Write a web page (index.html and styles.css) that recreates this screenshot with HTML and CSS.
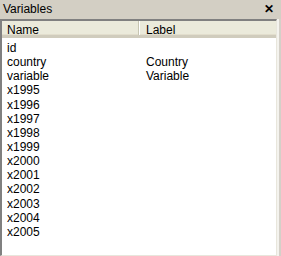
FILE: index.html
```html
<!DOCTYPE html>
<html lang="en">
<head>
    <meta charset="UTF-8">
    <title>Variables</title>
    <link rel="stylesheet" href="styles.css">
</head>
<body>
    <div id="panel">
        <div id="titleBar">
            <span>Variables</span>
            <span class="close">&#x2715;</span>
        </div>
        <div id="listBox">
            <div id="listHeader">
                <div class="col name">Name</div>
                <div class="col label">Label</div>
            </div>
            <div id="rows">
                <div class="row"><span class="name">id</span><span class="label"></span></div>
                <div class="row"><span class="name">country</span><span class="label">Country</span></div>
                <div class="row"><span class="name">variable</span><span class="label">Variable</span></div>
                <div class="row"><span class="name">x1995</span></div>
                <div class="row"><span class="name">x1996</span></div>
                <div class="row"><span class="name">x1997</span></div>
                <div class="row"><span class="name">x1998</span></div>
                <div class="row"><span class="name">x1999</span></div>
                <div class="row"><span class="name">x2000</span></div>
                <div class="row"><span class="name">x2001</span></div>
                <div class="row"><span class="name">x2002</span></div>
                <div class="row"><span class="name">x2003</span></div>
                <div class="row"><span class="name">x2004</span></div>
                <div class="row"><span class="name">x2005</span></div>
            </div>
        </div>
    </div>
</body>
</html>
```

FILE: styles.css
```css
* {
    margin: 0;
    padding: 0;
    box-sizing: border-box;
}
body {
    font-family: "Liberation Sans", Arial, sans-serif;
    font-size: 11px;
    color: black;
    background-color: #d4d0c8;
}
#panel {
    width: 281px;
    height: 256px;
    display: flex;
    flex-direction: column;
    background-color: #d4d0c8;
}
#titleBar {
    height: 19px;
    display: flex;
    align-items: center;
    justify-content: space-between;
    padding: 0 7px 1px 3px;
    background-color: #d3cfc4;
    font-size: 12px;
}
#titleBar .close {
    font-weight: bold;
    font-size: 12px;
}
#listBox {
    flex: 1;
    margin-right: 4px;
    background-color: white;
    border-top: 2px solid #808080;
    border-left: 2px solid #808080;
    border-right: 1px solid #e8e6dc;
    border-bottom: 1px solid #e8e6dc;
    box-shadow: 2px 0 0 #f4f3ee;
}
#listHeader {
    display: flex;
    height: 17px;
    background-color: #ebeadb;
    border-bottom: 3px solid #d0ccbd;
    box-shadow: inset 0 -1px 0 #e2decd;
}
#listHeader .col {
    padding: 2px 0 0 5px;
    font-size: 12px;
}
#listHeader .name {
    width: 137px;
    border-right: 1px solid #c7c5b2;
    box-shadow: 1px 0 0 white;
}
#listHeader .label {
    padding-left: 7px;
}
#rows {
    padding-top: 3px;
}
.row {
    display: flex;
    height: 14.15px;
    line-height: 14px;
    font-size: 12px;
}
.row .name {
    width: 138px;
    padding-left: 5px;
}
.row .label {
    padding-left: 6px;
}
```
